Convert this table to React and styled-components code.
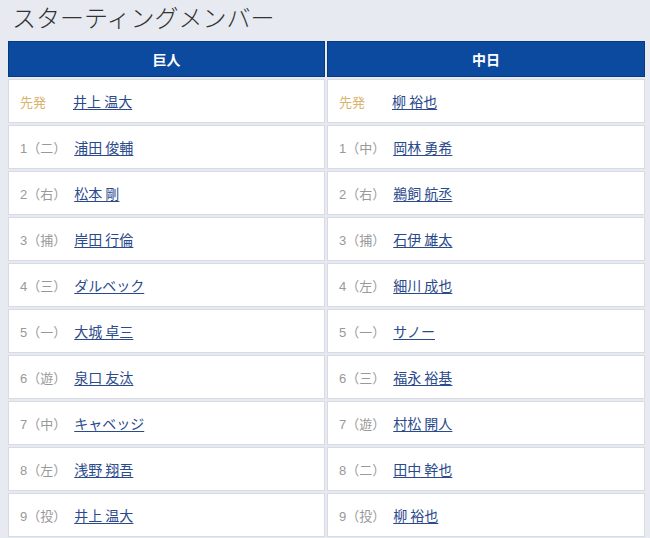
import React from 'react'
import styled, { createGlobalStyle } from 'styled-components'

const GlobalStyle = createGlobalStyle`
  html, body {
    margin: 0;
    padding: 0;
    background: #e7eaf0;
  }
  body {
    font-family: "Liberation Sans", "Noto Sans CJK JP", sans-serif;
  }
`

const Page = styled.div`
  padding: 0 5px 0 8px;
`

const Title = styled.h2`
  margin: 0;
  padding: 0 0 0 4px;
  height: 41px;
  line-height: 34px;
  font-size: 24px;
  font-weight: 300;
  color: #333;
  font-family: "Noto Sans CJK JP", sans-serif;
`

const Grid = styled.div`
  display: grid;
  grid-template-columns: 317px 318px;
  column-gap: 2px;
`

const Column = styled.div`
  display: flex;
  flex-direction: column;
  gap: 2px;
`

const Head = styled.div`
  height: 36px;
  background: #0c4a9f;
  border: 1px solid #083a80;
  box-sizing: border-box;
  color: #fff;
  font-weight: 700;
  font-size: 14px;
  display: flex;
  align-items: center;
  justify-content: center;
  font-family: "Noto Sans CJK JP", sans-serif;
`

const Row = styled.div`
  height: 44px;
  box-sizing: border-box;
  background: #fff;
  border: 1px solid #d7dbe3;
  display: flex;
  align-items: center;
  padding-left: 11px;
`

const Label = styled.span`
  min-width: 45px;
  margin-right: 8px;
  font-size: 13px;
  color: ${({ $starter }) => ($starter ? '#d8b46c' : '#999')};
  white-space: nowrap;
`

const Name = styled.a`
  font-size: 14px;
  color: #2a4a8c;
  text-decoration: underline;
  text-underline-offset: 2px;
  font-family: "Noto Sans CJK JP", sans-serif;
`

const teams = [
  {
    name: '巨人',
    starter: '井上 温大',
    order: [
      ['二', '浦田 俊輔'],
      ['右', '松本 剛'],
      ['捕', '岸田 行倫'],
      ['三', 'ダルベック'],
      ['一', '大城 卓三'],
      ['遊', '泉口 友汰'],
      ['中', 'キャベッジ'],
      ['左', '浅野 翔吾'],
      ['投', '井上 温大'],
    ],
  },
  {
    name: '中日',
    starter: '柳 裕也',
    order: [
      ['中', '岡林 勇希'],
      ['右', '鵜飼 航丞'],
      ['捕', '石伊 雄太'],
      ['左', '細川 成也'],
      ['一', 'サノー'],
      ['三', '福永 裕基'],
      ['遊', '村松 開人'],
      ['二', '田中 幹也'],
      ['投', '柳 裕也'],
    ],
  },
]

const TeamColumn = ({ team }) => (
  <Column>
    <Head>{team.name}</Head>
    <Row>
      <Label $starter>先発</Label>
      <Name href="#">{team.starter}</Name>
    </Row>
    {team.order.map(([pos, player], i) => (
      <Row key={i}>
        <Label>{`${i + 1}（${pos}）`}</Label>
        <Name href="#">{player}</Name>
      </Row>
    ))}
  </Column>
)

export default function App() {
  return (
    <Page>
      <GlobalStyle />
      <Title>スターティングメンバー</Title>
      <Grid>
        {teams.map((t) => (
          <TeamColumn key={t.name} team={t} />
        ))}
      </Grid>
    </Page>
  )
}
